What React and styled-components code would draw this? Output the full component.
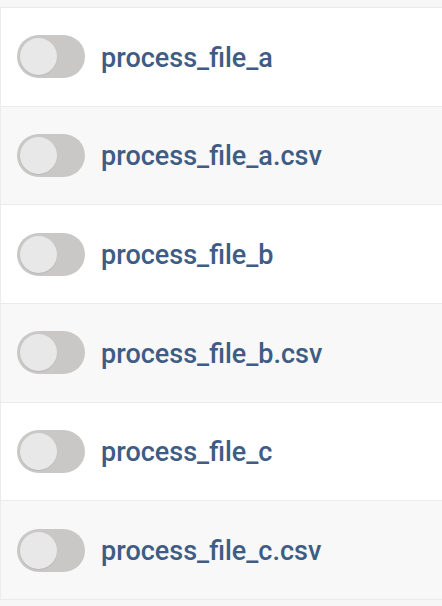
import React from "react";
import styled, { createGlobalStyle } from "styled-components";

const Global = createGlobalStyle`
  html, body { margin: 0; padding: 0; background: #f6f6f6; }
  body { font-family: Roboto, "Liberation Sans", Arial, sans-serif; }
`;

const List = styled.div`
  margin-top: 7px;
  border-left: 1px solid #ececec;
  border-bottom: 1px solid #ebebeb;
`;

const Row = styled.div`
  display: flex;
  align-items: center;
  gap: 16px;
  height: 97.67px;
  padding-left: 16px;
  border-top: 1px solid #ebebeb;
  background: ${(p) => (p.$alt ? "#f8f8f8" : "#ffffff")};
`;

const Track = styled.div`
  width: 68px;
  height: 43px;
  border-radius: 22px;
  background: #c9c8c7;
  display: flex;
  align-items: center;
  padding-left: 3px;
  box-sizing: border-box;
  flex-shrink: 0;
`;

const Knob = styled.div`
  width: 37px;
  height: 37px;
  border-radius: 50%;
  background: #e8e8e8;
  box-shadow: 0 1px 1px rgba(0, 0, 0, 0.08);
`;

const Label = styled.span`
  font-family: Roboto, "Liberation Sans", Arial, sans-serif;
  font-size: 27px;
  font-weight: 500;
  color: #3e5c84;
  padding-top: 2px;
`;

const items = [
  "process_file_a",
  "process_file_a.csv",
  "process_file_b",
  "process_file_b.csv",
  "process_file_c",
  "process_file_c.csv",
];

export default function App() {
  return (
    <>
      <Global />
      <List>
        {items.map((name, i) => (
          <Row key={name} $alt={i % 2 === 1}>
            <Track>
              <Knob />
            </Track>
            <Label>{name}</Label>
          </Row>
        ))}
      </List>
    </>
  );
}
